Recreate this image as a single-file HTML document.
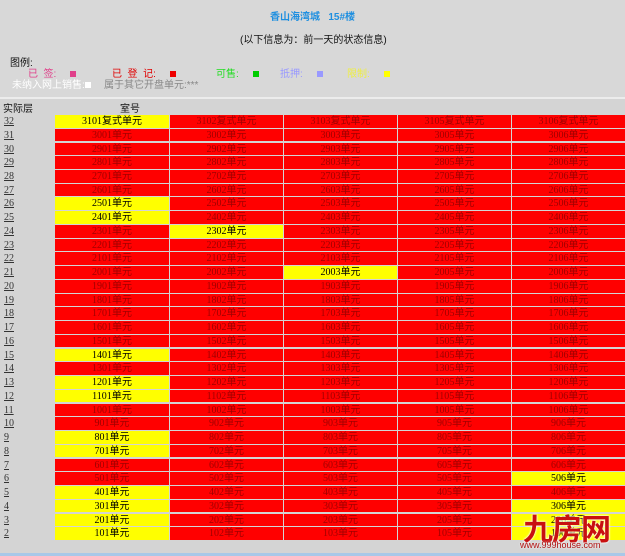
<!DOCTYPE html>
<html><head><meta charset="utf-8"><style>
body{margin:0;width:625px;height:556px;background:#d4d4d4;font-family:"Liberation Sans","Noto Sans CJK SC",sans-serif;position:relative;overflow:hidden;font-size:10px}
.a{position:absolute;white-space:nowrap}
.row{position:absolute;left:0;width:625px;height:12.7px}
.row span{position:absolute;top:0;height:12.7px;line-height:13px;text-align:center;font-size:10px;font-family:"Liberation Serif","Noto Sans CJK SC",serif}
.f{left:4px;width:40px;text-align:left!important;text-decoration:underline;color:#333}
.r{background:#f00;color:#a00000}
.y{background:#ff0;color:#000}
.c1{left:55px;width:114px}.c2{left:170px;width:113px}.c3{left:284px;width:113px}.c4{left:398px;width:113px}.c5{left:512px;width:113px}
</style></head><body>
<div class="a" style="left:0;top:0;width:625px;height:97px;background:#d8d8d8"></div>
<div class="a" style="left:0;top:97px;width:625px;height:2px;background:#ececec"></div>
<div class="a" style="left:270px;top:8px;color:#1e8fe0;font-weight:bold;font-size:10px">香山海湾城&nbsp;&nbsp;&nbsp;15#楼</div>
<div class="a" style="left:240px;top:31px;color:#111;font-size:10px">(以下信息为：前一天的状态信息)</div>
<div class="a" style="left:10px;top:54px;color:#111;font-size:10px">图例:</div>
<div class="a" style="left:28px;top:65px;color:#e0408a;font-size:10px">已&nbsp;&nbsp;签:&nbsp;&nbsp;&nbsp;&nbsp;&nbsp;<span style="display:inline-block;width:6px;height:6px;background:#e0408a"></span></div>
<div class="a" style="left:112px;top:65px;color:#e00000;font-size:10px">已&nbsp;&nbsp;登&nbsp;&nbsp;记:&nbsp;&nbsp;&nbsp;&nbsp;&nbsp;<span style="display:inline-block;width:6px;height:6px;background:#e00"></span></div>
<div class="a" style="left:216px;top:65px;color:#22dd22;font-size:10px">可售:&nbsp;&nbsp;&nbsp;&nbsp;&nbsp;<span style="display:inline-block;width:6px;height:6px;background:#0c0"></span></div>
<div class="a" style="left:280px;top:65px;color:#9999ff;font-size:10px">抵押:&nbsp;&nbsp;&nbsp;&nbsp;&nbsp;<span style="display:inline-block;width:6px;height:6px;background:#99f"></span></div>
<div class="a" style="left:347px;top:65px;color:#eeee44;font-size:10px">限制:&nbsp;&nbsp;&nbsp;&nbsp;&nbsp;<span style="display:inline-block;width:6px;height:6px;background:#ff0"></span></div>
<div class="a" style="left:12px;top:76px;color:#fff;font-size:10px">未纳入网上销售:<span style="display:inline-block;width:6px;height:6px;background:#fff"></span></div>
<div class="a" style="left:104px;top:76px;color:#888;font-size:10px">属于其它开盘单元:***</div>
<div class="a" style="left:3px;top:100px;color:#111;font-size:10px">实际层</div>
<div class="a" style="left:120px;top:100px;color:#111;font-size:10px">室号</div>

<div class="row" style="top:115.0px"><span class="f">32</span><span class="c1 y">3101复式单元</span><span class="c2 r">3102复式单元</span><span class="c3 r">3103复式单元</span><span class="c4 r">3105复式单元</span><span class="c5 r">3106复式单元</span></div>
<div class="row" style="top:128.7px"><span class="f">31</span><span class="c1 r">3001单元</span><span class="c2 r">3002单元</span><span class="c3 r">3003单元</span><span class="c4 r">3005单元</span><span class="c5 r">3006单元</span></div>
<div class="row" style="top:142.5px"><span class="f">30</span><span class="c1 r">2901单元</span><span class="c2 r">2902单元</span><span class="c3 r">2903单元</span><span class="c4 r">2905单元</span><span class="c5 r">2906单元</span></div>
<div class="row" style="top:156.2px"><span class="f">29</span><span class="c1 r">2801单元</span><span class="c2 r">2802单元</span><span class="c3 r">2803单元</span><span class="c4 r">2805单元</span><span class="c5 r">2806单元</span></div>
<div class="row" style="top:170.0px"><span class="f">28</span><span class="c1 r">2701单元</span><span class="c2 r">2702单元</span><span class="c3 r">2703单元</span><span class="c4 r">2705单元</span><span class="c5 r">2706单元</span></div>
<div class="row" style="top:183.7px"><span class="f">27</span><span class="c1 r">2601单元</span><span class="c2 r">2602单元</span><span class="c3 r">2603单元</span><span class="c4 r">2605单元</span><span class="c5 r">2606单元</span></div>
<div class="row" style="top:197.4px"><span class="f">26</span><span class="c1 y">2501单元</span><span class="c2 r">2502单元</span><span class="c3 r">2503单元</span><span class="c4 r">2505单元</span><span class="c5 r">2506单元</span></div>
<div class="row" style="top:211.2px"><span class="f">25</span><span class="c1 y">2401单元</span><span class="c2 r">2402单元</span><span class="c3 r">2403单元</span><span class="c4 r">2405单元</span><span class="c5 r">2406单元</span></div>
<div class="row" style="top:224.9px"><span class="f">24</span><span class="c1 r">2301单元</span><span class="c2 y">2302单元</span><span class="c3 r">2303单元</span><span class="c4 r">2305单元</span><span class="c5 r">2306单元</span></div>
<div class="row" style="top:238.7px"><span class="f">23</span><span class="c1 r">2201单元</span><span class="c2 r">2202单元</span><span class="c3 r">2203单元</span><span class="c4 r">2205单元</span><span class="c5 r">2206单元</span></div>
<div class="row" style="top:252.4px"><span class="f">22</span><span class="c1 r">2101单元</span><span class="c2 r">2102单元</span><span class="c3 r">2103单元</span><span class="c4 r">2105单元</span><span class="c5 r">2106单元</span></div>
<div class="row" style="top:266.1px"><span class="f">21</span><span class="c1 r">2001单元</span><span class="c2 r">2002单元</span><span class="c3 y">2003单元</span><span class="c4 r">2005单元</span><span class="c5 r">2006单元</span></div>
<div class="row" style="top:279.9px"><span class="f">20</span><span class="c1 r">1901单元</span><span class="c2 r">1902单元</span><span class="c3 r">1903单元</span><span class="c4 r">1905单元</span><span class="c5 r">1906单元</span></div>
<div class="row" style="top:293.6px"><span class="f">19</span><span class="c1 r">1801单元</span><span class="c2 r">1802单元</span><span class="c3 r">1803单元</span><span class="c4 r">1805单元</span><span class="c5 r">1806单元</span></div>
<div class="row" style="top:307.4px"><span class="f">18</span><span class="c1 r">1701单元</span><span class="c2 r">1702单元</span><span class="c3 r">1703单元</span><span class="c4 r">1705单元</span><span class="c5 r">1706单元</span></div>
<div class="row" style="top:321.1px"><span class="f">17</span><span class="c1 r">1601单元</span><span class="c2 r">1602单元</span><span class="c3 r">1603单元</span><span class="c4 r">1605单元</span><span class="c5 r">1606单元</span></div>
<div class="row" style="top:334.8px"><span class="f">16</span><span class="c1 r">1501单元</span><span class="c2 r">1502单元</span><span class="c3 r">1503单元</span><span class="c4 r">1505单元</span><span class="c5 r">1506单元</span></div>
<div class="row" style="top:348.6px"><span class="f">15</span><span class="c1 y">1401单元</span><span class="c2 r">1402单元</span><span class="c3 r">1403单元</span><span class="c4 r">1405单元</span><span class="c5 r">1406单元</span></div>
<div class="row" style="top:362.3px"><span class="f">14</span><span class="c1 r">1301单元</span><span class="c2 r">1302单元</span><span class="c3 r">1303单元</span><span class="c4 r">1305单元</span><span class="c5 r">1306单元</span></div>
<div class="row" style="top:376.1px"><span class="f">13</span><span class="c1 y">1201单元</span><span class="c2 r">1202单元</span><span class="c3 r">1203单元</span><span class="c4 r">1205单元</span><span class="c5 r">1206单元</span></div>
<div class="row" style="top:389.8px"><span class="f">12</span><span class="c1 y">1101单元</span><span class="c2 r">1102单元</span><span class="c3 r">1103单元</span><span class="c4 r">1105单元</span><span class="c5 r">1106单元</span></div>
<div class="row" style="top:403.5px"><span class="f">11</span><span class="c1 r">1001单元</span><span class="c2 r">1002单元</span><span class="c3 r">1003单元</span><span class="c4 r">1005单元</span><span class="c5 r">1006单元</span></div>
<div class="row" style="top:417.3px"><span class="f">10</span><span class="c1 r">901单元</span><span class="c2 r">902单元</span><span class="c3 r">903单元</span><span class="c4 r">905单元</span><span class="c5 r">906单元</span></div>
<div class="row" style="top:431.0px"><span class="f">9</span><span class="c1 y">801单元</span><span class="c2 r">802单元</span><span class="c3 r">803单元</span><span class="c4 r">805单元</span><span class="c5 r">806单元</span></div>
<div class="row" style="top:444.8px"><span class="f">8</span><span class="c1 y">701单元</span><span class="c2 r">702单元</span><span class="c3 r">703单元</span><span class="c4 r">705单元</span><span class="c5 r">706单元</span></div>
<div class="row" style="top:458.5px"><span class="f">7</span><span class="c1 r">601单元</span><span class="c2 r">602单元</span><span class="c3 r">603单元</span><span class="c4 r">605单元</span><span class="c5 r">606单元</span></div>
<div class="row" style="top:472.2px"><span class="f">6</span><span class="c1 r">501单元</span><span class="c2 r">502单元</span><span class="c3 r">503单元</span><span class="c4 r">505单元</span><span class="c5 y">506单元</span></div>
<div class="row" style="top:486.0px"><span class="f">5</span><span class="c1 y">401单元</span><span class="c2 r">402单元</span><span class="c3 r">403单元</span><span class="c4 r">405单元</span><span class="c5 r">406单元</span></div>
<div class="row" style="top:499.7px"><span class="f">4</span><span class="c1 y">301单元</span><span class="c2 r">302单元</span><span class="c3 r">303单元</span><span class="c4 r">305单元</span><span class="c5 y">306单元</span></div>
<div class="row" style="top:513.5px"><span class="f">3</span><span class="c1 y">201单元</span><span class="c2 r">202单元</span><span class="c3 r">203单元</span><span class="c4 r">205单元</span><span class="c5 y">206单元</span></div>
<div class="row" style="top:527.2px"><span class="f">2</span><span class="c1 y">101单元</span><span class="c2 r">102单元</span><span class="c3 r">103单元</span><span class="c4 r">105单元</span><span class="c5 y">106单元</span></div>

<div class="a" style="left:523px;top:505px;font-size:30px;font-weight:bold;color:#c81010;letter-spacing:-1px;text-shadow:0 0 2px #fff,0 0 2px #fff">九房网</div>
<div class="a" style="left:520px;top:540px;font-size:9px;color:#b01010;text-shadow:0 0 2px #fff">www.999house.com</div>
<div class="a" style="left:0;top:553px;width:625px;height:3px;background:#a8c8e8"></div>
</body></html>
